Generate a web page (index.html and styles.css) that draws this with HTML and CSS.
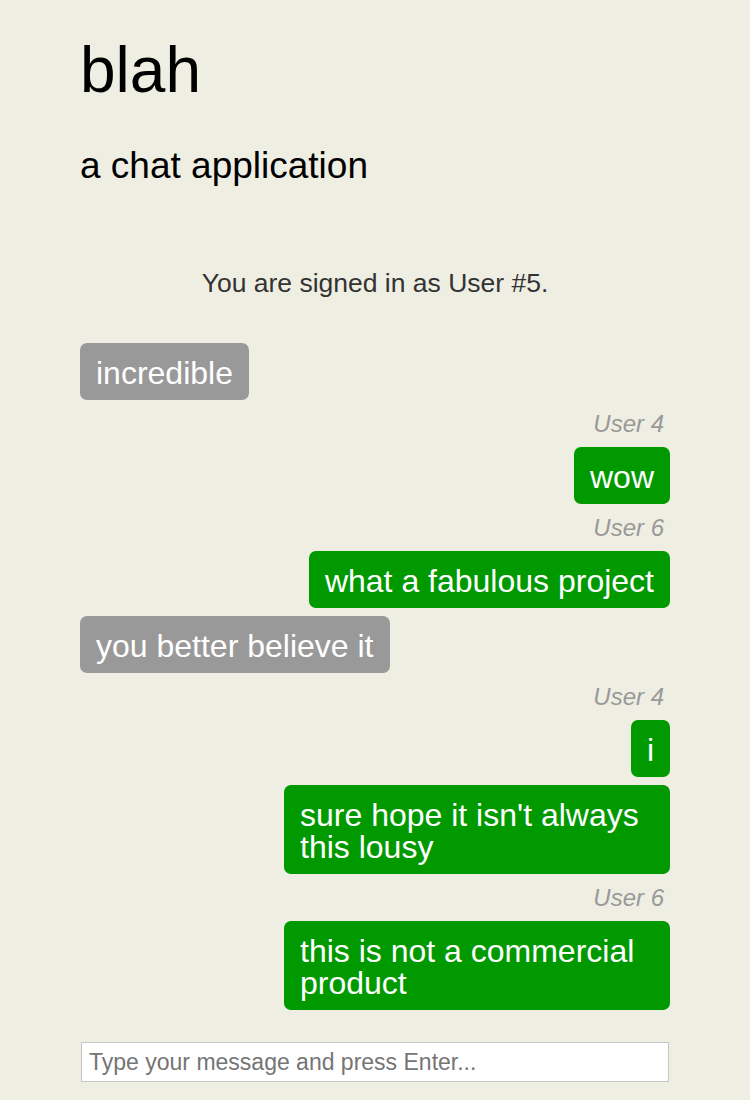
FILE: index.html
```html
<!DOCTYPE html>
<html lang="en">
<head>
<meta charset="utf-8">
<title>blah</title>
<link rel="stylesheet" href="styles.css">
</head>
<body>
<main class="app">
  <header class="header">
    <h1 class="title">blah</h1>
    <h2 class="subtitle">a chat application</h2>
  </header>
  <p class="status">You are signed in as User #5.</p>
  <section class="messages">
    <div class="bubble mine">incredible</div>
    <div class="sender">User 4</div>
    <div class="bubble theirs">wow</div>
    <div class="sender">User 6</div>
    <div class="bubble theirs">what a fabulous project</div>
    <div class="bubble mine">you better believe it</div>
    <div class="sender">User 4</div>
    <div class="bubble theirs">i</div>
    <div class="bubble theirs">sure hope it isn't always this lousy</div>
    <div class="sender">User 6</div>
    <div class="bubble theirs">this is not a commercial product</div>
  </section>
  <input class="composer" type="text" placeholder="Type your message and press Enter...">
</main>
</body>
</html>
```
FILE: styles.css
```css
html, body {
  margin: 0;
  padding: 0;
}
body {
  background: #efeee3;
  font-family: "Liberation Sans", Arial, Helvetica, sans-serif;
  color: #000;
}
.app {
  width: 590px;
  margin: 0 auto;
  display: flex;
  flex-direction: column;
}
.header {
  display: flex;
  flex-direction: column;
}
.title {
  font-size: 64px;
  font-weight: normal;
  line-height: 1.15;
  margin: 34px 0 0;
}
.subtitle {
  font-size: 37px;
  font-weight: normal;
  line-height: 1.15;
  margin: 37px 0 0;
}
.status {
  font-size: 26.5px;
  line-height: 30px;
  color: #333;
  text-align: center;
  margin: 81px 0 0;
}
.messages {
  margin-top: 45px;
  display: flex;
  flex-direction: column;
  gap: 8px;
}
.bubble {
  font-size: 32px;
  line-height: 32px;
  padding: 13.5px 16px 11.5px;
  border-radius: 7px;
  color: #fff;
  max-width: 386px;
  box-sizing: border-box;
}
.mine {
  align-self: flex-start;
  background: #999999;
}
.theirs {
  align-self: flex-end;
  background: #009900;
}
.sender {
  align-self: flex-end;
  font-size: 24px;
  line-height: 28px;
  font-style: italic;
  color: #999;
  padding: 2px 6px 1px 0;
}
.composer {
  margin: 32px 1px 0;
  height: 40px;
  box-sizing: border-box;
  border: 1px solid #c6c6c6;
  background: #fff;
  padding: 0 7px;
  font-family: "Liberation Sans", Arial, Helvetica, sans-serif;
  font-size: 23px;
  color: #333;
  outline: none;
}
.composer::placeholder {
  color: #757575;
}
```
